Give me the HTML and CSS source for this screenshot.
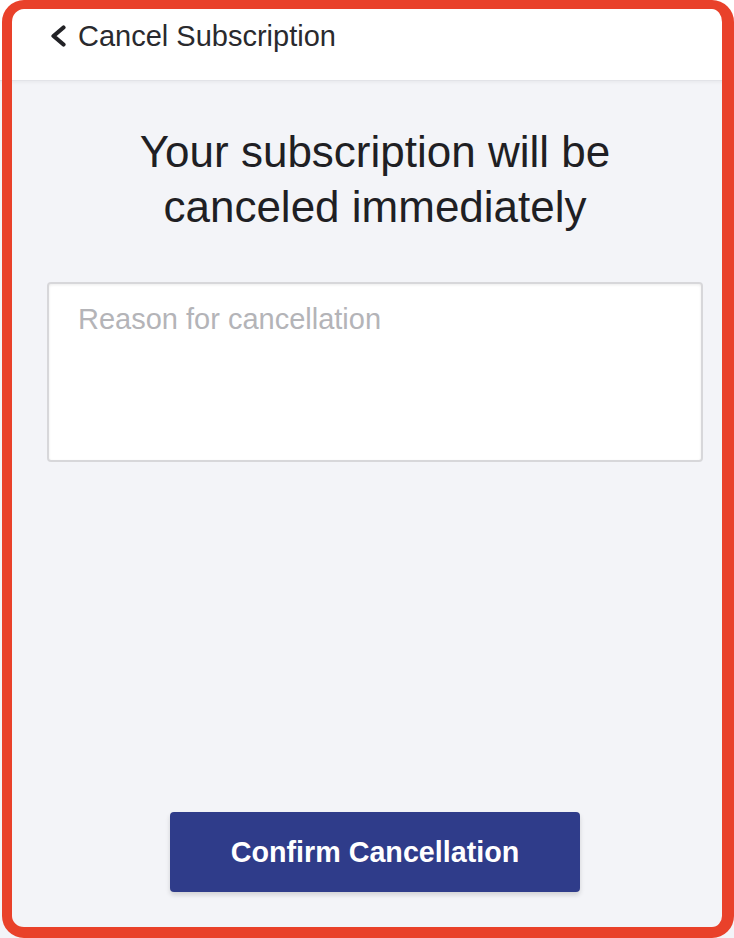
FILE: index.html
```html
<!DOCTYPE html>
<html lang="en">
<head>
<meta charset="utf-8">
<title>Cancel Subscription</title>
<link rel="stylesheet" href="styles.css">
</head>
<body>
<div class="app">
  <header class="topbar">
    <a class="back" href="#">
      <svg class="back-icon" width="18" height="22" viewBox="0 0 18 22" aria-hidden="true">
        <polyline points="14.5,2.5 4.5,11 14.5,19.5" fill="none" stroke="#222226" stroke-width="4.2" stroke-linecap="round" stroke-linejoin="round"/>
      </svg>
      <span class="back-label">Cancel Subscription</span>
    </a>
  </header>
  <main class="content">
    <h1 class="title">Your subscription will be<br>canceled immediately</h1>
    <textarea class="reason" placeholder="Reason for cancellation"></textarea>
    <button class="confirm" type="button">Confirm Cancellation</button>
  </main>
</div>
<div class="frame"></div>
</body>
</html>
```
FILE: styles.css
```css
html, body {
  margin: 0;
  padding: 0;
  height: 100%;
  overflow: hidden;
  background: #f3f4f8;
}

body {
  font-family: "Liberation Sans", Arial, sans-serif;
}

.app {
  width: 750px;
  height: 938px;
  display: flex;
  flex-direction: column;
  background: #f3f4f8;
}

.topbar {
  height: 80px;
  flex: none;
  background: #ffffff;
  box-shadow: 0 1px 0 #e2e3e8, 0 2px 4px rgba(0, 0, 0, 0.06);
  position: relative;
  z-index: 1;
  box-sizing: border-box;
  padding: 18px 0 0 49px;
}

.back {
  display: flex;
  align-items: center;
  gap: 11px;
  text-decoration: none;
  color: #2a2a2e;
  height: 36px;
}

.back-icon {
  display: block;
}

.back-label {
  font-size: 29px;
  line-height: 36px;
}

.content {
  flex: 1;
  display: flex;
  flex-direction: column;
  align-items: center;
  padding: 44px 47px 46px;
}

.title {
  margin: 0;
  font-weight: 400;
  font-size: 44px;
  line-height: 55px;
  color: #1f1f24;
  text-align: center;
}

.reason {
  align-self: stretch;
  margin-top: 48px;
  height: 180px;
  box-sizing: border-box;
  border: 2px solid #d7d7da;
  border-radius: 4px;
  box-shadow: inset 0 1px 3px rgba(0, 0, 0, 0.08);
  background: #ffffff;
  padding: 17px 29px;
  font-family: inherit;
  font-size: 29px;
  line-height: 36px;
  color: #222;
  resize: none;
  outline: none;
}

.reason::placeholder {
  color: #b4b4b8;
}

.confirm {
  margin-top: auto;
  width: 410px;
  height: 80px;
  border: none;
  border-radius: 4px;
  background: #2f3c8a;
  color: #ffffff;
  font-family: inherit;
  font-weight: 700;
  font-size: 28.7px;
  box-shadow: 0 3px 5px rgba(0, 0, 0, 0.14);
  cursor: pointer;
}

/* red outline drawn over the screen */
.frame {
  position: fixed;
  left: 2px;
  top: 0;
  width: 732px;
  height: 938px;
  box-sizing: border-box;
  border-style: solid;
  border-color: #e9412a;
  border-width: 9px 12px 11px 10px;
  border-radius: 22px;
  pointer-events: none;
  z-index: 5;
}
```
